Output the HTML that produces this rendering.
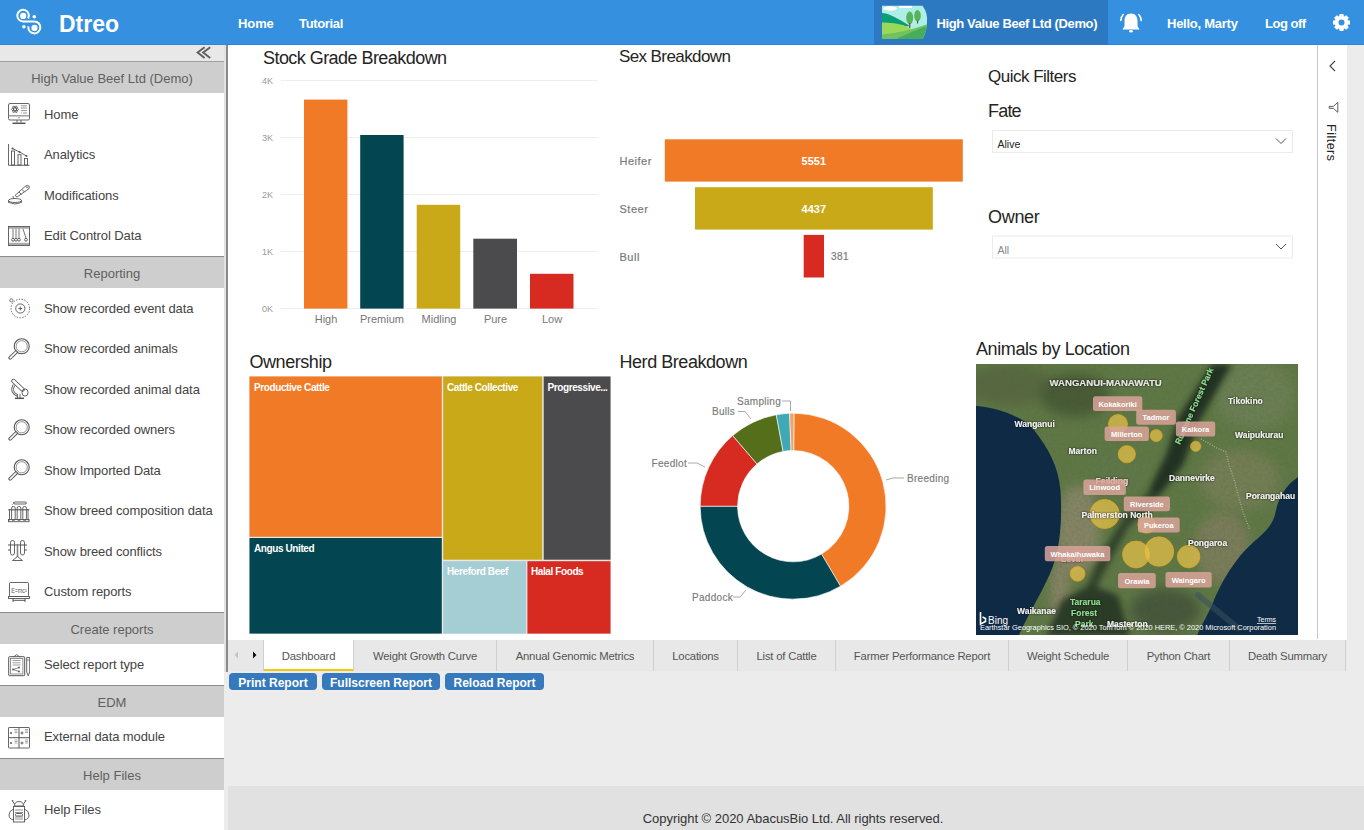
<!DOCTYPE html>
<html><head><meta charset="utf-8">
<style>
*{margin:0;padding:0;box-sizing:border-box}
html,body{width:1364px;height:830px;overflow:hidden;background:#ececec;font-family:"Liberation Sans",sans-serif;position:relative}
.abs{position:absolute}
#hdr{position:absolute;left:0;top:0;width:1364px;height:45px;background:#3591e0;border-bottom:1px solid #2a86d6}
.hn{position:absolute;color:#fff;font-weight:bold;font-size:13px;line-height:16px;top:15.5px;white-space:nowrap}
#side{position:absolute;left:0;top:45px;width:224px;height:785px;background:#fff}
#collapse{position:absolute;left:0;top:0;width:224px;height:17px;background:#e8e8e8;border-bottom:1px solid #999}
.sh{position:absolute;left:0;width:224px;height:32px;background:#cecece;border-top:1px solid #8c8c8c;color:#606060;font-size:13px;text-align:center;line-height:33px}
.si{position:absolute;left:0;width:224px;height:40.5px;color:#444;font-size:13px;letter-spacing:-0.1px}
.si span{position:absolute;left:44px;top:12.7px;line-height:16px;white-space:nowrap}
.si svg{position:absolute;left:8px;top:9px}
#sideline{position:absolute;left:224px;top:45px;width:2px;height:627px;background:#e2e2e2}
#sideline2{position:absolute;left:226px;top:45px;width:2px;height:627px;background:#8a8a8a}
#content{position:absolute;left:228px;top:45px;width:1119px;height:595px;background:#fff}
.title{position:absolute;color:#252423;font-size:18px;white-space:nowrap;line-height:22px}
.ax{position:absolute;color:#777;font-size:10px;white-space:nowrap;line-height:12px}
.tab{position:absolute;top:640px;height:31px;background:#e8e8e8;border-right:1px solid #cfcfcf;color:#555;font-size:11.3px;letter-spacing:-0.2px;text-align:center;line-height:33px;white-space:nowrap}
.btn{position:absolute;top:673px;height:17px;background:#3679bc;color:#fff;border-radius:4px;font-size:12px;font-weight:bold;line-height:20px;text-align:center;white-space:nowrap}
#footer{position:absolute;left:228px;top:786px;width:1136px;height:44px;background:#e1e1e1}
</style></head><body>

<div id="hdr">
  <svg class="abs" style="left:0;top:0" width="50" height="45" viewBox="0 0 50 45">
    <path d="M28.1,18.5 A5.8,5.8 0 1 0 23.1,21.4 L34.3,21.4 A6,6 0 1 1 28.4,26.4" fill="none" stroke="#fff" stroke-width="2"/>
    <circle cx="23.2" cy="15.9" r="3.1" fill="#fff"/><circle cx="34.5" cy="27.9" r="3.1" fill="#fff"/>
    <circle cx="34.3" cy="16.7" r="1.8" fill="#fff"/><circle cx="23.9" cy="26.8" r="1.8" fill="#fff"/>
  </svg>
  <div class="hn" style="left:59px;top:11px;font-size:23px;line-height:26px">Dtreo</div>
  <div class="hn" style="left:238px;letter-spacing:-0.1px">Home</div>
  <div class="hn" style="left:299px;letter-spacing:-0.35px">Tutorial</div>
  <div class="abs" style="left:874px;top:0;width:234px;height:45px;background:#2c79c2"></div>
  <svg class="abs" style="left:881px;top:5px" width="47" height="35" viewBox="0 0 47 35">
    <defs><clipPath id="thc"><path d="M1,0.7 L41.5,0.7 Q47,8 46,17.5 Q45.5,27 41.5,34 L1,34 Z"/></clipPath></defs>
    <g clip-path="url(#thc)">
      <rect x="0" y="0" width="47" height="35" fill="#aeeee6"/>
      <ellipse cx="9" cy="3.5" rx="7" ry="2.2" fill="#fff"/><rect x="18" y="0.7" width="13" height="2.2" fill="#fff"/>
      <path d="M0,8 Q4,7.5 8,9.5 Q14,12 20,15.5 Q25,18.5 29,21 L0,24 Z" fill="#0a9e78"/>
      <path d="M0,17.5 Q12,17 22,20 Q27,22 30,24 L30,35 L0,35 Z" fill="#9ad85a"/>
      <path d="M0,29.5 Q22,28 47,19 L47,35 L0,35 Z" fill="#72c262"/>
      <path d="M13,35 Q32,26 47,20.5 L47,35 Z" fill="#48ad5a"/>
      <ellipse cx="28.7" cy="12.9" rx="3.5" ry="6.3" fill="#56b45a"/><rect x="28.2" y="18" width="1.1" height="5" fill="#6b3e2a"/>
      <ellipse cx="36.5" cy="10.7" rx="3.3" ry="5.7" fill="#56b45a"/><rect x="36" y="15.5" width="1.1" height="3" fill="#6b3e2a"/>
    </g>
  </svg>
  <div class="hn" style="left:936.5px;letter-spacing:-0.38px">High Value Beef Ltd (Demo)</div>
  <svg class="abs" style="left:1119px;top:12px" width="24" height="22" viewBox="0 0 24 22">
    <path d="M12,1.5 C7.5,1.5 5.5,5 5.5,9 L5.5,14 L3.5,17.5 L20.5,17.5 L18.5,14 L18.5,9 C18.5,5 16.5,1.5 12,1.5Z" fill="#fff"/>
    <ellipse cx="12" cy="19.2" rx="1.8" ry="1.3" fill="#fff"/>
    <path d="M4.2,2.5 Q1.8,5 1.8,8.5 M19.8,2.5 Q22.2,5 22.2,8.5" fill="none" stroke="#fff" stroke-width="1.6" stroke-linecap="round"/>
  </svg>
  <div class="hn" style="left:1167px;letter-spacing:-0.25px">Hello, Marty</div>
  <div class="hn" style="left:1265px;letter-spacing:-0.5px">Log off</div>
  <svg class="abs" style="left:1331px;top:12px" width="21" height="21" viewBox="-10.5 -10.5 21 21">
    <path d="M6.18,-2.33 L8.49,-1.90 L8.49,1.90 L6.18,2.33 L6.01,2.72 L7.35,4.66 L4.66,7.35 L2.72,6.01 L2.33,6.18 L1.90,8.49 L-1.90,8.49 L-2.33,6.18 L-2.72,6.01 L-4.66,7.35 L-7.35,4.66 L-6.01,2.72 L-6.18,2.33 L-8.49,1.90 L-8.49,-1.90 L-6.18,-2.33 L-6.01,-2.72 L-7.35,-4.66 L-4.66,-7.35 L-2.72,-6.01 L-2.33,-6.18 L-1.90,-8.49 L1.90,-8.49 L2.33,-6.18 L2.72,-6.01 L4.66,-7.35 L7.35,-4.66 L6.01,-2.72Z M3,0 A3,3 0 1 0 -3,0 A3,3 0 1 0 3,0Z" fill="#fff" fill-rule="evenodd"/>
  </svg>
</div>

<div id="side">
  <div id="collapse"><svg class="abs" style="left:196px;top:0px" width="16" height="16" viewBox="0 0 16 16"><path d="M8.6,2.3 L1.6,7.6 L8.6,12.9 M14.2,2.3 L7.2,7.6 L14.2,12.9" fill="none" stroke="#5f5f5f" stroke-width="1.9"/></svg></div>
  <div class="sh" style="top:16px;border-top-color:#a0a0a0">High Value Beef Ltd (Demo)</div>
  <div class="sh" style="top:211px">Reporting</div>
  <div class="sh" style="top:567px">Create reports</div>
  <div class="sh" style="top:640px">EDM</div>
  <div class="sh" style="top:713px">Help Files</div>
  <div class="si" style="top:49px"><svg style="left:8px;top:9px" width="22" height="23" viewBox="0 0 22 23"><rect x="0.5" y="0.5" width="21" height="16.5" rx="1.5" fill="none" stroke="#555" stroke-width="0.9"/>
<path d="M0.8,12.8 h20.4" stroke="#999" stroke-width="1.4"/>
<path d="M10.3,14.8 h1.4" stroke="#555" stroke-width="0.8"/>
<path d="M9,17 v2.5 M13,17 v2.5" fill="none" stroke="#555" stroke-width="0.9"/>
<path d="M4.5,20.3 h13" stroke="#555" stroke-width="1.5"/>
<g transform="translate(7,6.3)" fill="none" stroke="#555" stroke-width="0.8"><ellipse rx="3.6" ry="1.4"/><ellipse rx="3.6" ry="1.4" transform="rotate(60)"/><ellipse rx="3.6" ry="1.4" transform="rotate(-60)"/></g>
<path d="M13,2.8 h6 M13,5 h6 M13,7.6 h6 M15,10 h4 M13,10 h0.8" stroke="#777" stroke-width="0.8"/></svg><span>Home</span></div>
  <div class="si" style="top:89.5px"><svg style="left:8px;top:9.5px" width="22" height="23" viewBox="0 0 22 23"><path d="M0.5,0 v21.3 h21" fill="none" stroke="#555" stroke-width="0.9"/>
<rect x="3.5" y="7" width="3" height="14" fill="none" stroke="#555" stroke-width="0.9"/>
<rect x="10" y="10.7" width="3" height="10.3" fill="none" stroke="#555" stroke-width="0.9"/>
<rect x="16.5" y="14.5" width="3" height="6.5" fill="none" stroke="#555" stroke-width="0.9"/>
<path d="M4.5,4.5 L11.5,8 L18.5,12" fill="none" stroke="#555" stroke-width="0.9"/>
<circle cx="4.5" cy="4.5" r="1" fill="#555"/><circle cx="11.5" cy="8" r="1" fill="#555"/><circle cx="18.5" cy="12" r="1" fill="#555"/>
<path d="M0,3 h1 M0,6 h1 M0,9 h1 M0,12 h1 M0,15 h1 M0,18 h1" stroke="#777" stroke-width="0.6"/></svg><span>Analytics</span></div>
  <div class="si" style="top:130px"><svg style="left:8px;top:8.8px" width="22" height="23" viewBox="0 0 22 23"><path d="M7,11.5 L16.5,3 Q19.5,0 21.3,2.2 Q22,5 18.8,6.2 L9,13 Z" fill="none" stroke="#555" stroke-width="0.9"/>
<path d="M11,8 l2.5,2.5 M14,5.5 l2.5,2.5" fill="none" stroke="#555" stroke-width="0.9"/>
<circle cx="19" cy="3.3" r="0.8" fill="#555"/>
<ellipse cx="7" cy="16.5" rx="6.5" ry="2" fill="none" stroke="#555" stroke-width="0.9"/>
<path d="M0.5,16.5 v2 Q7,21.5 13.5,18.5 v-2" fill="none" stroke="#555" stroke-width="0.9"/>
<path d="M5,12 l0.5,3" fill="none" stroke="#555" stroke-width="0.9"/></svg><span>Modifications</span></div>
  <div class="si" style="top:170.5px"><svg style="left:8px;top:10.4px" width="22" height="23" viewBox="0 0 22 23"><rect x="0.5" y="0.5" width="21" height="19" fill="none" stroke="#555" stroke-width="0.9"/>
<rect x="1" y="1" width="20" height="1.8" fill="#aaa"/>
<rect x="1" y="16.8" width="20" height="2.2" fill="#aaa"/>
<path d="M5,2.8 v9.5 M8,2.8 v9.5 M11,2.8 v9.5 M15,2.8 l3,9.5" stroke="#555" stroke-width="0.8"/>
<circle cx="5" cy="13.7" r="1.4" fill="none" stroke="#555" stroke-width="0.9"/><circle cx="8" cy="13.7" r="1.4" fill="none" stroke="#555" stroke-width="0.9"/><circle cx="11" cy="13.7" r="1.4" fill="none" stroke="#555" stroke-width="0.9"/><circle cx="18" cy="13.7" r="1.4" fill="none" stroke="#555" stroke-width="0.9"/></svg><span>Edit Control Data</span></div>
  <div class="si" style="top:243px"><svg style="left:8px;top:9px" width="22" height="23" viewBox="0 0 22 23"><circle cx="12.3" cy="11.5" r="9.3" fill="none" stroke="#555" stroke-width="0.9" stroke-dasharray="1.4 1.4"/>
<circle cx="12.3" cy="11.5" r="4.6" fill="none" stroke="#555" stroke-width="0.9"/>
<path d="M12.3,9.6 v3.8 M10.4,11.5 h3.8" fill="none" stroke="#555" stroke-width="0.9"/>
<circle cx="3.4" cy="3.4" r="1.6" fill="none" stroke="#555" stroke-width="0.8"/></svg><span>Show recorded event data</span></div>
  <div class="si" style="top:283.5px"><svg style="left:8px;top:9.4px" width="22" height="23" viewBox="0 0 22 23"><circle cx="13.7" cy="8.3" r="7.5" fill="none" stroke="#555" stroke-width="1.1"/>
<circle cx="13.7" cy="8.3" r="5.6" fill="none" stroke="#777" stroke-width="0.8"/>
<path d="M8,14.2 L2.2,19.8" stroke="#555" stroke-width="3.6" stroke-linecap="round"/>
<path d="M8,14.2 L2.2,19.8" stroke="#fff" stroke-width="1.6" stroke-linecap="round"/></svg><span>Show recorded animals</span></div>
  <div class="si" style="top:324px"><svg style="left:8px;top:9px" width="22" height="23" viewBox="0 0 22 23"><path d="M5.5,3 L14.5,11.5" stroke="#555" stroke-width="4.4" stroke-linecap="round"/>
<path d="M5.5,3 L14.5,11.5" stroke="#fff" stroke-width="2.6" stroke-linecap="round"/>
<path d="M6,7 Q2,14 9.5,17.5" fill="none" stroke="#555" stroke-width="2.6"/>
<path d="M6,7 Q2,14 9.5,17.5" fill="none" stroke="#fff" stroke-width="1"/>
<ellipse cx="17" cy="14.5" rx="3" ry="3.6" fill="none" stroke="#555" stroke-width="0.9"/>
<path d="M7,20.3 h9" stroke="#555" stroke-width="1.5"/>
<path d="M9.5,16 v4 M12,16 v4" fill="none" stroke="#555" stroke-width="0.9"/></svg><span>Show recorded animal data</span></div>
  <div class="si" style="top:364.5px"><svg style="left:8px;top:9.4px" width="22" height="23" viewBox="0 0 22 23"><circle cx="13.7" cy="8.3" r="7.5" fill="none" stroke="#555" stroke-width="1.1"/>
<circle cx="13.7" cy="8.3" r="5.6" fill="none" stroke="#777" stroke-width="0.8"/>
<path d="M8,14.2 L2.2,19.8" stroke="#555" stroke-width="3.6" stroke-linecap="round"/>
<path d="M8,14.2 L2.2,19.8" stroke="#fff" stroke-width="1.6" stroke-linecap="round"/></svg><span>Show recorded owners</span></div>
  <div class="si" style="top:405px"><svg style="left:8px;top:9.4px" width="22" height="23" viewBox="0 0 22 23"><circle cx="13.7" cy="8.3" r="7.5" fill="none" stroke="#555" stroke-width="1.1"/>
<circle cx="13.7" cy="8.3" r="5.6" fill="none" stroke="#777" stroke-width="0.8"/>
<path d="M8,14.2 L2.2,19.8" stroke="#555" stroke-width="3.6" stroke-linecap="round"/>
<path d="M8,14.2 L2.2,19.8" stroke="#fff" stroke-width="1.6" stroke-linecap="round"/></svg><span>Show Imported Data</span></div>
  <div class="si" style="top:445.5px"><svg style="left:8px;top:9.3px" width="22" height="23" viewBox="0 0 22 23"><path d="M7,2 h10 q1.5,0 1.5,1 q0,1 -1.5,1 h-10 l-2,-1 z" fill="none" stroke="#555" stroke-width="0.9"/>
<path d="M4.5,4 v4" stroke="#888" stroke-width="0.7" stroke-dasharray="1 1"/>
<rect x="3.6" y="6.5" width="3.6" height="14" rx="1.6" fill="none" stroke="#555" stroke-width="0.9"/>
<rect x="9.2" y="6.5" width="3.6" height="14" rx="1.6" fill="none" stroke="#555" stroke-width="0.9"/>
<rect x="14.8" y="6.5" width="3.6" height="14" rx="1.6" fill="none" stroke="#555" stroke-width="0.9"/>
<path d="M0.3,9.8 h21" stroke="#555" stroke-width="1.1"/>
<path d="M1.5,9 v11.5 M20,9 v11.5" fill="none" stroke="#555" stroke-width="0.9"/>
<rect x="0.5" y="19.5" width="20.5" height="2.2" fill="none" stroke="#555" stroke-width="0.9"/></svg><span>Show breed composition data</span></div>
  <div class="si" style="top:486px"><svg style="left:8px;top:8.8px" width="22" height="23" viewBox="0 0 22 23"><rect x="2.5" y="0.5" width="4" height="14.5" rx="1.9" fill="none" stroke="#555" stroke-width="0.9"/>
<rect x="12.5" y="0.5" width="4" height="14.5" rx="1.9" fill="none" stroke="#555" stroke-width="0.9"/>
<path d="M0,5 h19 M0,10 h2 M17,10 h2" stroke="#555" stroke-width="1"/>
<path d="M9.5,4 v13" stroke="#888" stroke-width="1.6"/>
<path d="M4.5,20.5 L9.5,16.5 L14.5,20.5 Z" fill="none" stroke="#555" stroke-width="0.9"/></svg><span>Show breed conflicts</span></div>
  <div class="si" style="top:526.5px"><svg style="left:8px;top:10.4px" width="22" height="23" viewBox="0 0 22 23"><rect x="1.5" y="0.5" width="19" height="14" rx="1" fill="none" stroke="#555" stroke-width="0.9"/>
<text x="3.2" y="10.5" font-size="6.5" fill="#555" font-family="Liberation Sans" textLength="15.5" lengthAdjust="spacingAndGlyphs">E=mc²</text>
<rect x="0.5" y="14.5" width="21" height="2" fill="none" stroke="#555" stroke-width="0.9"/>
<path d="M5,16.5 v3.5 M17,16.5 v3.5 M5,18.3 h12" stroke="#555" stroke-width="1"/></svg><span>Custom reports</span></div>
  <div class="si" style="top:599px"><svg style="left:8px;top:9.8px" width="22" height="23" viewBox="0 0 22 23"><rect x="0.7" y="2.7" width="16" height="19" rx="0.8" fill="none" stroke="#555" stroke-width="1"/>
<rect x="2.5" y="4.5" width="12.4" height="15.5" fill="none" stroke="#666" stroke-width="0.7"/>
<path d="M5.5,3 L8.6,0.6 L11.7,3" fill="none" stroke="#555" stroke-width="0.9"/>
<path d="M4.5,6.5 h8 M4.5,8.8 h8 M4.5,11 h8" stroke="#777" stroke-width="0.7"/>
<circle cx="5" cy="15.5" r="0.9" fill="#555"/><circle cx="11" cy="13.5" r="0.9" fill="#555"/><circle cx="11" cy="17.5" r="0.9" fill="#555"/>
<path d="M5,15.5 L11,13.5 M5,15.5 L11,17.5" stroke="#555" stroke-width="0.7"/>
<path d="M18.7,3.5 h3 v14.5 l-1.5,3.8 l-1.5,-3.8 z" fill="none" stroke="#555" stroke-width="0.9"/>
<path d="M18.7,6 h3" stroke="#555" stroke-width="0.7"/></svg><span>Select report type</span></div>
  <div class="si" style="top:671.5px"><svg style="left:8px;top:10.8px" width="22" height="23" viewBox="0 0 22 23"><rect x="0.5" y="0.5" width="21" height="20.5" rx="0.6" fill="none" stroke="#555" stroke-width="0.9"/>
<path d="M11,0.5 v20.5 M0.5,10.7 h21" stroke="#555" stroke-width="1"/>
<path d="M6,2.5 h3.5 M6.5,4 h3 M6.5,5.5 h3 M17,2.5 h3 M17,4 h3 M17,5.5 h3 M6.5,13 h3 M6.5,14.5 h3 M6.5,16 h3 M17,13 h3 M17,14.5 h3 M17,16 h3" stroke="#888" stroke-width="0.7"/>
<circle cx="3" cy="6" r="1" fill="#555"/><circle cx="14" cy="6" r="1" fill="none" stroke="#555" stroke-width="0.9"/><circle cx="3" cy="16" r="1" fill="#555"/><circle cx="14" cy="16" r="1" fill="none" stroke="#555" stroke-width="0.9"/></svg><span>External data module</span></div>
  <div class="si" style="top:744px"><svg style="left:8px;top:10.7px" width="22" height="23" viewBox="0 0 22 23"><path d="M6.5,6 q0,-4.5 4.5,-4.5 q4.5,0 4.5,4.5 z" fill="none" stroke="#555" stroke-width="0.9"/>
<circle cx="4.5" cy="0.8" r="0.8" fill="#555"/><circle cx="17.5" cy="0.8" r="0.8" fill="#555"/>
<path d="M4.5,1 l2,3 M17.5,1 l-2,3" fill="none" stroke="#555" stroke-width="0.9"/>
<rect x="5.5" y="6.5" width="11" height="15.5" fill="none" stroke="#555" stroke-width="0.9"/>
<path d="M7,10 h8 M7,12.5 h8 M7,17 h8 M7,19 h8" stroke="#777" stroke-width="0.8"/>
<rect x="7.5" y="13.5" width="7" height="2.5" rx="1" fill="none" stroke="#555" stroke-width="0.9"/>
<path d="M5.5,9 Q1,11 1,15 Q1,19 5.5,20 M16.5,9 Q21,11 21,15 Q21,19 16.5,20" fill="none" stroke="#555" stroke-width="0.9"/></svg><span>Help Files</span></div>
</div>
<div id="sideline"></div>
<div id="sideline2"></div>

<div id="content"></div>
<svg class="abs" style="left:976px;top:364px" width="322" height="271" viewBox="976 364 322 271" font-family="Liberation Sans, sans-serif">
<defs>
<filter id="noise" x="0" y="0" width="100%" height="100%"><feTurbulence type="fractalNoise" baseFrequency="0.35" numOctaves="2" seed="3"/><feColorMatrix type="matrix" values="0 0 0 0 0.1  0 0 0 0 0.12  0 0 0 0 0.05  0 0 0 -1.6 1.05"/></filter>
<filter id="blur2"><feGaussianBlur stdDeviation="3"/></filter>
<filter id="blur5"><feGaussianBlur stdDeviation="6"/></filter>
<filter id="tsh" x="-10%" y="-30%" width="120%" height="160%"><feGaussianBlur in="SourceAlpha" stdDeviation="0.8"/><feOffset dx="0" dy="0"/><feComponentTransfer><feFuncA type="linear" slope="0.9"/></feComponentTransfer><feMerge><feMergeNode/><feMergeNode in="SourceGraphic"/></feMerge></filter>
</defs>
<rect x="976" y="364" width="322" height="271" fill="#5e7845"/>
<!-- land texture -->
<g filter="url(#blur5)">
<ellipse cx="1010" cy="385" rx="45" ry="20" fill="#56683f"/>
<ellipse cx="1075" cy="395" rx="35" ry="22" fill="#465a36"/>
<ellipse cx="1255" cy="395" rx="40" ry="35" fill="#6a7f52"/>
<ellipse cx="1078" cy="530" rx="22" ry="45" fill="#858565"/>
<ellipse cx="1060" cy="590" rx="9" ry="32" fill="#8a8468"/>
<ellipse cx="1222" cy="548" rx="28" ry="36" fill="#7a7d5a"/>
<ellipse cx="1240" cy="480" rx="40" ry="30" fill="#737e55"/>
<ellipse cx="1165" cy="610" rx="35" ry="22" fill="#45563a"/>
<ellipse cx="1120" cy="470" rx="25" ry="20" fill="#5f7849"/>
</g>
<rect x="976" y="364" width="322" height="271" filter="url(#noise)" opacity="0.3"/>
<!-- forest ridge -->
<g filter="url(#blur2)">
<path d="M1212,364 L1232,364 L1200,420 L1183,465 L1160,495 L1148,492 L1166,455 L1178,418 Z" fill="#243322"/>
<path d="M1150,490 L1160,495 L1128,528 L1108,565 L1090,600 L1082,598 L1098,560 L1122,520 Z" fill="#33432c"/>
<path d="M1046,636 L1062,600 L1090,585 L1118,595 L1130,636 Z" fill="#2c3b27"/>
</g>
<!-- seas -->
<path d="M976,405.8 C995,408 1020,414 1034,430 C1048,448 1058,465 1060.5,490 C1062,515 1061,545 1053,566 C1045,588 1030,610 1018.6,636 L976,636 Z" fill="#0f2a44"/>
<path d="M1298,477 C1285,486 1278,498 1275,515 C1270,532 1255,538 1240,556 C1225,575 1218,590 1212,605 C1206,618 1200,628 1197,636 L1298,636 Z" fill="#0f2b45"/>
<path d="M1201,439 L1216,447.6 L1226,452 L1229,465 L1234,479 L1239,498 L1243,512 L1250,530" fill="none" stroke="#c8ccb8" stroke-width="1.4" stroke-dasharray="1 1.5" opacity="0.6"/>
<path d="M1198,595 L1238,628" stroke="#3a5060" stroke-width="6" stroke-linecap="round" opacity="0.55"/>
<!-- circles -->
<g fill="#e8c24a" fill-opacity="0.72" stroke="#d9a520" stroke-opacity="0.8" stroke-width="1">
<circle cx="1118" cy="424" r="9.5"/>
<circle cx="1126.8" cy="454.2" r="8.6"/>
<circle cx="1156.2" cy="435.6" r="6"/>
<circle cx="1195.7" cy="446.3" r="5.1"/>
<circle cx="1104.7" cy="514" r="14.6"/>
<circle cx="1136" cy="554.5" r="13.5"/>
<circle cx="1159" cy="551.6" r="14.75"/>
<circle cx="1188.6" cy="556.6" r="11.3"/>
<circle cx="1077.6" cy="573.8" r="7.4"/>
<circle cx="1146.5" cy="524.6" r="8.6"/>
</g>
<!-- place names -->
<g font-size="8.5" font-weight="bold" fill="#f0f0f0" filter="url(#tsh)">
<text x="1049.5" y="385.5" font-size="9.6" fill="#e6e6e6">WANGANUI-MANAWATU</text>
<text x="1014.5" y="427">Wanganui</text>
<text x="1068.5" y="453.5">Marton</text>
<text x="1095.5" y="483.5" fill="#f0dada">Feilding</text>
<text x="1228" y="404">Tikokino</text>
<text x="1235" y="438">Waipukurau</text>
<text x="1169" y="481">Dannevirke</text>
<text x="1246" y="498.5">Porangahau</text>
<text x="1081.5" y="517.5">Palmerston North</text>
<text x="1188" y="545.5">Pongaroa</text>
<text x="1061" y="562" fill="#e6b8b8">Levin</text>
<text x="1017" y="613.5">Waikanae</text>
<text x="1107" y="627">Masterton</text>
<text x="1070" y="605" fill="#8fdc8f">Tararua</text>
<text x="1071" y="616" fill="#8fdc8f">Forest</text>
<text x="1075" y="627" fill="#8fdc8f">Park</text>
<text transform="translate(1180,445) rotate(-66)" fill="#8fdc8f">Ruahine Forest Park</text>
</g>
<!-- pink labels -->
<g fill="#d9a39a" fill-opacity="0.85">
<rect x="1093" y="396.3" width="49.3" height="14.7" rx="2.5"/>
<rect x="1136.2" y="409.8" width="39.7" height="15" rx="2.5"/>
<rect x="1175.9" y="421.4" width="39.3" height="15" rx="2.5"/>
<rect x="1104.6" y="426.4" width="44.3" height="14.6" rx="2.5"/>
<rect x="1083.4" y="479.6" width="42.4" height="15.4" rx="2.5"/>
<rect x="1123.8" y="496.5" width="46.2" height="14.7" rx="2.5"/>
<rect x="1138" y="517.4" width="41.7" height="15" rx="2.5"/>
<rect x="1044.8" y="545.9" width="65.5" height="15.4" rx="2.5"/>
<rect x="1118" y="572.9" width="37.8" height="15.4" rx="2.5"/>
<rect x="1165.5" y="572" width="46.2" height="15.5" rx="2.5"/>
</g>
<g font-size="7.5" font-weight="bold" fill="#fff" text-anchor="middle">
<text x="1117.6" y="406.5">Kokakoriki</text>
<text x="1156" y="420.3">Tadmor</text>
<text x="1195.5" y="432">Kaikora</text>
<text x="1126.7" y="436.8">Millerton</text>
<text x="1104.6" y="490.3">Linwood</text>
<text x="1146.9" y="507">Riverside</text>
<text x="1158.8" y="528">Pukeroa</text>
<text x="1077.5" y="556.6">Whakaihuwaka</text>
<text x="1137" y="583.6">Orawia</text>
<text x="1188.6" y="582.8">Waingaro</text>
</g>
<!-- bing + attribution -->
<path d="M980.5,612 l0,12 l5,-2.5 l0,-3 l-3,-1.5" fill="none" stroke="#fff" stroke-width="1.6"/>
<text x="988" y="624" font-size="10" fill="#fff">Bing</text>
<text x="1257" y="622" font-size="7" fill="#fff" text-decoration="underline">Terms</text>
<text x="980" y="630" font-size="6.6" fill="#fff" textLength="296" lengthAdjust="spacingAndGlyphs">Earthstar Geographics SIO, © 2020 TomTom © 2020 HERE, © 2020 Microsoft Corporation</text>
</svg>

<svg class="abs" style="left:0;top:0" width="1364" height="830" viewBox="0 0 1364 830" font-family="Liberation Sans, sans-serif">
<!-- Stock grade -->
<text x="263" y="64.2" font-size="18" letter-spacing="-0.55" fill="#252423">Stock Grade Breakdown</text>
<g stroke="#eeeeee" stroke-width="1">
<line x1="281" y1="80.5" x2="598" y2="80.5"/><line x1="281" y1="137.5" x2="598" y2="137.5"/><line x1="281" y1="194.5" x2="598" y2="194.5"/><line x1="281" y1="251.5" x2="598" y2="251.5"/><line x1="281" y1="308.5" x2="598" y2="308.5"/>
</g>
<g font-size="9" fill="#9a9a9a">
<text x="262" y="84">4K</text><text x="262" y="141">3K</text><text x="262" y="198">2K</text><text x="262" y="255">1K</text><text x="262" y="312">0K</text>
</g>
<rect x="304" y="99.6" width="43.4" height="209" fill="#F17A27"/>
<rect x="360.2" y="135" width="43.4" height="173.6" fill="#034652"/>
<rect x="416.7" y="204.8" width="43.5" height="103.8" fill="#C9A917"/>
<rect x="473.3" y="238.7" width="43.7" height="69.9" fill="#4B4B4D"/>
<rect x="530" y="273.8" width="43.5" height="34.8" fill="#D72B21"/>
<g font-size="11" fill="#777" text-anchor="middle">
<text x="326" y="323">High</text><text x="382" y="323">Premium</text><text x="439" y="323">Midling</text><text x="495.5" y="323">Pure</text><text x="552" y="323">Low</text>
</g>

<!-- Sex breakdown -->
<text x="619" y="62" font-size="17" letter-spacing="-0.6" fill="#252423">Sex Breakdown</text>
<rect x="664.8" y="139.3" width="298" height="42.3" fill="#F17A27"/>
<rect x="695" y="187.2" width="237.8" height="42.4" fill="#C9A917"/>
<rect x="803.7" y="234.9" width="20.3" height="42.6" fill="#D72B21"/>
<g font-size="11" fill="#7a7a7a" stroke="#7a7a7a" stroke-width="0.2" letter-spacing="0.5">
<text x="619.5" y="165">Heifer</text><text x="619.5" y="213">Steer</text><text x="619.5" y="261">Bull</text>
<text x="831" y="260" font-size="10">381</text>
</g>
<g font-size="11" fill="#fff" font-weight="bold" text-anchor="middle">
<text x="813.8" y="165">5551</text><text x="813.8" y="213">4437</text>
</g>

<!-- Quick filters -->
<text x="988" y="82.3" font-size="17" letter-spacing="-0.5" fill="#252423">Quick Filters</text>
<text x="988" y="116.8" font-size="18" letter-spacing="-0.8" fill="#252423">Fate</text>
<rect x="992.5" y="130.5" width="300" height="22" fill="#fff" stroke="#ebebeb"/>
<text x="997.5" y="148" font-size="10.5" fill="#252423">Alive</text>
<path d="M1276,138.5 l5,5 l5,-5" fill="none" stroke="#555" stroke-width="1"/>
<text x="988" y="223.3" font-size="18" letter-spacing="-0.3" fill="#252423">Owner</text>
<rect x="992.5" y="236" width="300" height="22" fill="#fff" stroke="#ebebeb"/>
<text x="997.5" y="253.5" font-size="10.5" fill="#888">All</text>
<path d="M1276,244 l5,5 l5,-5" fill="none" stroke="#555" stroke-width="1"/>

<!-- Filters pane -->
<line x1="1317.5" y1="45" x2="1317.5" y2="639" stroke="#c8c8c8"/>
<path d="M1335,61 l-5,5 l5,5" fill="none" stroke="#444" stroke-width="1.1"/>
<path d="M1337.8,102.4 L1333.3,106.4 L1329.2,106.4 L1329.2,108.3 L1333.3,108.3 L1337.8,112.3 Z" fill="none" stroke="#4a4a55" stroke-width="0.9" stroke-linejoin="round"/>
<text transform="translate(1327,124) rotate(90)" font-size="12.5" letter-spacing="0.5" fill="#252423">Filters</text>

<!-- Ownership treemap -->
<text x="249.5" y="368" font-size="18" letter-spacing="-0.45" fill="#252423">Ownership</text>
<rect x="249" y="376" width="362" height="258" fill="#e8e8e8"/>
<rect x="249.5" y="376.5" width="192.3" height="160.3" fill="#F17A27"/>
<rect x="249.5" y="538" width="192.3" height="95.6" fill="#034652"/>
<rect x="443.2" y="376.5" width="99" height="183.2" fill="#C9A917"/>
<rect x="543.7" y="376.5" width="66.8" height="183.2" fill="#4B4B4D"/>
<rect x="443.2" y="561.2" width="83" height="72.4" fill="#A4CED4"/>
<rect x="527.4" y="561.2" width="83.1" height="72.4" fill="#D72B21"/>
<g font-size="10" fill="#fff" font-weight="bold" letter-spacing="-0.4">
<text x="254" y="391">Productive Cattle</text>
<text x="254" y="552">Angus United</text>
<text x="447" y="391">Cattle Collective</text>
<text x="547.5" y="391">Progressive...</text>
<text x="447" y="575">Hereford Beef</text>
<text x="531" y="575">Halal Foods</text>
</g>

<!-- Herd donut -->
<text x="619.5" y="368" font-size="18" letter-spacing="-0.45" fill="#252423">Herd Breakdown</text>
<path d="M794.0,413.2 A93,93 0 0 1 840.5,586.2 L821.5,554.1 A55.6,55.6 0 0 0 793.7,450.6Z" fill="#F17A27" stroke="#fff" stroke-width="0.6"/>
<path d="M840.5,586.2 A93,93 0 0 1 700.2,506.2 L737.6,506.2 A55.6,55.6 0 0 0 821.5,554.1Z" fill="#034652" stroke="#fff" stroke-width="0.6"/>
<path d="M700.2,506.2 A93,93 0 0 1 732.7,435.6 L757.0,464.0 A55.6,55.6 0 0 0 737.6,506.2Z" fill="#D72B21" stroke="#fff" stroke-width="0.6"/>
<path d="M732.7,435.6 A93,93 0 0 1 776.3,414.8 L783.1,451.5 A55.6,55.6 0 0 0 757.0,464.0Z" fill="#546E19" stroke="#fff" stroke-width="0.6"/>
<path d="M776.3,414.8 A93,93 0 0 1 789.6,413.3 L791.1,450.6 A55.6,55.6 0 0 0 783.1,451.5Z" fill="#3FA9B5" stroke="#fff" stroke-width="0.6"/>
<path d="M789.6,413.3 A93,93 0 0 1 794.0,413.2 L793.7,450.6 A55.6,55.6 0 0 0 791.1,450.6Z" fill="#F4A06A" stroke="#fff" stroke-width="0.6"/>
<g fill="none" stroke="#aaa" stroke-width="1">
<path d="M886,480 L893,478 L904,478"/>
<path d="M733,597 L740,597 L746,590"/>
<path d="M688,463 L697,463 L705,467"/>
<path d="M738,411.5 L745,411.5 L751,419"/>
<path d="M782,401 L790.5,401 L790.5,411"/>
</g>
<g font-size="10" fill="#7a7a7a" stroke="#7a7a7a" stroke-width="0.15" letter-spacing="0.3">
<text x="907" y="482">Breeding</text>
<text x="692" y="601">Paddock</text>
<text x="651.5" y="467">Feedlot</text>
<text x="712" y="415">Bulls</text>
<text x="737" y="405">Sampling</text>
</g>

<!-- Animals by location -->
<text x="976" y="355" font-size="18" letter-spacing="-0.4" fill="#252423">Animals by Location</text>
</svg>


<!-- tabs -->
<div class="tab" style="left:228px;width:36px;border-right:1px solid #cfcfcf"><svg class="abs" style="left:0;top:0" width="36" height="31" viewBox="0 0 36 31"><path d="M10,11.5 L6.5,15 L10,18.5Z" fill="#c4c4c4"/><path d="M25,11.5 L28.5,15 L25,18.5Z" fill="#111"/></svg></div>
<div class="tab" style="left:264px;width:90px;background:#fff;border-bottom:2px solid #f2c811">Dashboard</div>
<div class="tab" style="left:354px;width:143px">Weight Growth Curve</div>
<div class="tab" style="left:497px;width:157px">Annual Genomic Metrics</div>
<div class="tab" style="left:654px;width:84px">Locations</div>
<div class="tab" style="left:738px;width:98px">List of Cattle</div>
<div class="tab" style="left:836px;width:173px">Farmer Performance Report</div>
<div class="tab" style="left:1009px;width:119px">Weight Schedule</div>
<div class="tab" style="left:1128px;width:102px">Python Chart</div>
<div class="tab" style="left:1230px;width:116px">Death Summary</div>

<div class="btn" style="left:229px;width:88px">Print Report</div>
<div class="btn" style="left:322px;width:118px">Fullscreen Report</div>
<div class="btn" style="left:445px;width:99px">Reload Report</div>

<div id="footer"><div class="abs" style="left:-3px;width:1136px;top:25px;text-align:center;color:#333;font-size:13px;letter-spacing:-0.03px">Copyright © 2020 AbacusBio Ltd. All rights reserved.</div></div>

</body></html>
